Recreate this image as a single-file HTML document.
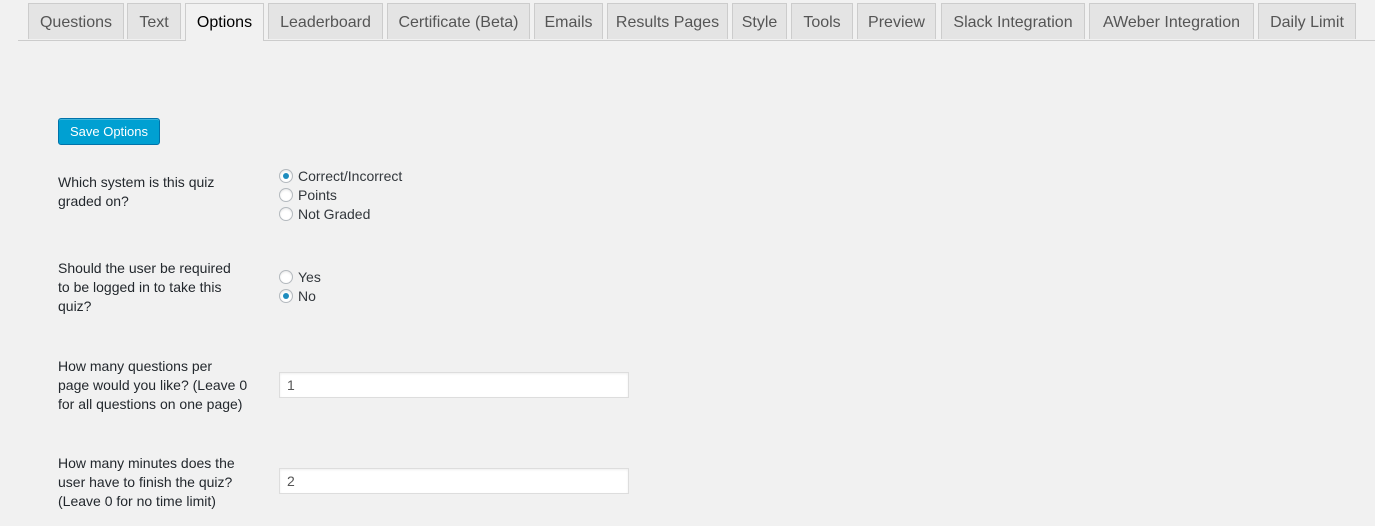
<!DOCTYPE html>
<html><head><style>
body{margin:0;width:1375px;height:526px;background:#f1f1f1;font-family:"Liberation Sans",sans-serif;color:#23282d;position:relative;overflow:hidden}
.tab{position:absolute;top:3px;height:36px;background:#e4e4e4;border:1px solid #ccc;border-bottom:none;box-sizing:border-box;text-align:center;line-height:37px;font-size:16px;color:#555;}
.tab.act{background:#f1f1f1;color:#000;height:38px}
.line{position:absolute;left:18px;right:0;top:40px;border-top:1px solid #ccc}
.btn{position:absolute;left:58px;top:118px;width:102px;height:27px;box-sizing:border-box;background:#00a0d2;border:1px solid #0073aa;border-radius:3px;color:#fff;font-size:13px;text-align:center;line-height:25px;box-shadow:inset 0 1px 0 rgba(120,200,230,.5)}
.lbl{position:absolute;left:58px;width:215px;font-size:14px;line-height:19px;color:#23282d;white-space:nowrap}
.r{position:absolute;left:279px;font-size:14px;line-height:19px;color:#32373c;padding-left:19px}
.r:before{content:"";position:absolute;left:0;top:2px;width:14px;height:14px;box-sizing:border-box;border:1px solid #b4b9be;border-radius:50%;background:#fff;box-shadow:inset 0 1px 2px rgba(0,0,0,.1)}
.r.on:after{content:"";position:absolute;left:4px;top:6px;width:6px;height:6px;border-radius:50%;background:#1e8cbe}
.inp{position:absolute;left:279px;width:350px;height:26px;box-sizing:border-box;background:#fff;border:1px solid #ddd;font-size:14px;color:#555;padding-left:7px;line-height:24px;box-shadow:inset 0 1px 2px rgba(0,0,0,.07)}
</style></head><body>
<div class="line"></div>
<div class="tab" style="left:28px;width:96px">Questions</div>
<div class="tab" style="left:127px;width:54px">Text</div>
<div class="tab act" style="left:185px;width:79px">Options</div>
<div class="tab" style="left:268px;width:115px">Leaderboard</div>
<div class="tab" style="left:387px;width:143px">Certificate (Beta)</div>
<div class="tab" style="left:534px;width:69px">Emails</div>
<div class="tab" style="left:607px;width:121px">Results Pages</div>
<div class="tab" style="left:732px;width:55px">Style</div>
<div class="tab" style="left:791px;width:62px">Tools</div>
<div class="tab" style="left:857px;width:79px">Preview</div>
<div class="tab" style="left:941px;width:144px">Slack Integration</div>
<div class="tab" style="left:1089px;width:165px">AWeber Integration</div>
<div class="tab" style="left:1258px;width:98px">Daily Limit</div>

<div class="btn">Save Options</div>

<div class="lbl" style="top:173px">Which system is this quiz<br>graded on?</div>
<div class="r on" style="top:167px">Correct/Incorrect</div>
<div class="r" style="top:186px">Points</div>
<div class="r" style="top:205px">Not Graded</div>

<div class="lbl" style="top:259px">Should the user be required<br>to be logged in to take this<br>quiz?</div>
<div class="r" style="top:268px">Yes</div>
<div class="r on" style="top:287px">No</div>

<div class="lbl" style="top:357px">How many questions per<br>page would you like? (Leave 0<br>for all questions on one page)</div>
<div class="inp" style="top:372px">1</div>

<div class="lbl" style="top:454px">How many minutes does the<br>user have to finish the quiz?<br>(Leave 0 for no time limit)</div>
<div class="inp" style="top:468px">2</div>
</body></html>
